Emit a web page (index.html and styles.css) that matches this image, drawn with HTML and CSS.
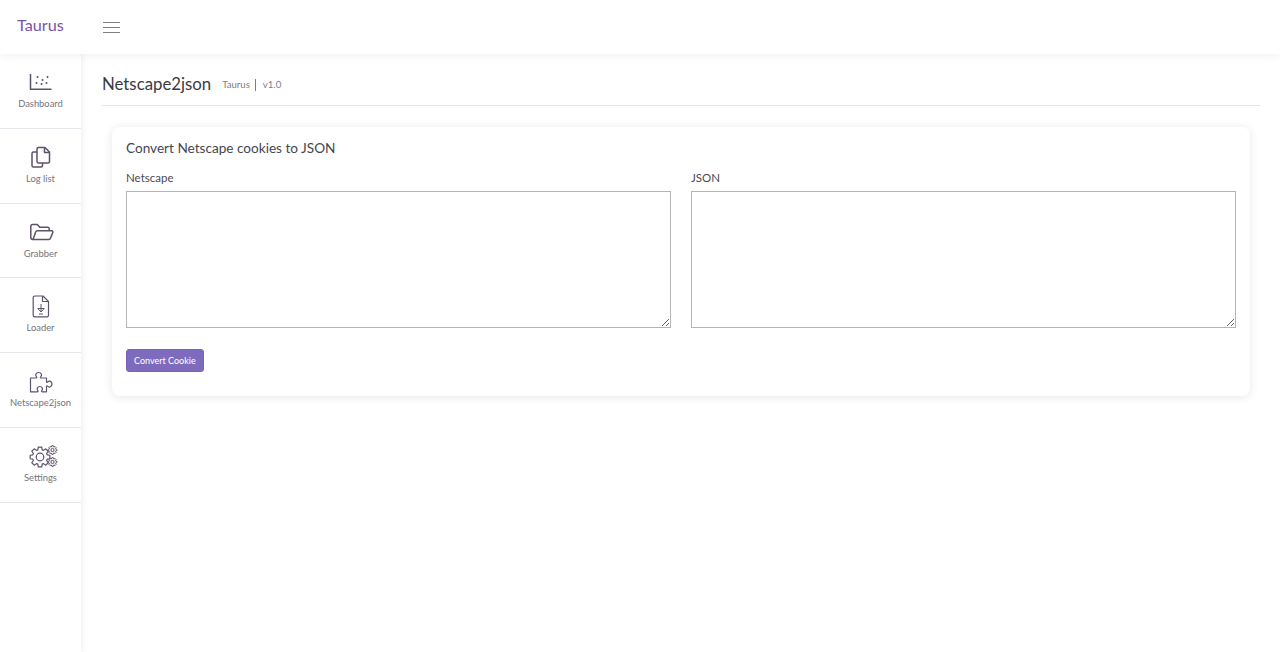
FILE: index.html
```html
<!DOCTYPE html>
<html lang="en">
  <head>
    <meta charset="utf-8" />
    <title>Netscape2json - Taurus</title>
    <link rel="stylesheet" href="styles.css">
  </head>
  <body>
    <!-- Top bar -->
    <header class="topbar">
      <a class="topbar__logo">Taurus</a>
      <button class="topbar__toggle" aria-label="Menu">
        <span></span><span></span><span></span>
      </button>
    </header>

    <div class="layout">
      <!-- Sidebar -->
      <nav class="sidebar">
        <a class="sidebar__item">
          <svg class="sidebar__icon" viewBox="0 0 30 24">
            <path d="M4.500 3v15.200h21" />
            <circle class="dot" cx="11.500" cy="6" r="1" />
            <circle class="dot" cx="10.500" cy="12" r="1" />
            <circle class="dot" cx="16.500" cy="9" r="1" />
            <circle class="dot" cx="21.500" cy="6" r="1" />
            <circle class="dot" cx="20.500" cy="12" r="1" />
            <circle class="dot" cx="15.500" cy="13" r="1" />
          </svg>
          <span>Dashboard</span>
        </a>
        <a class="sidebar__item">
          <svg class="sidebar__icon" viewBox="0 0 30 24">
            <path d="M11 3c0-.9.6-1.500 1.500-1.500h6.500l4.500 4.500v9.500c0 .9-.6 1.500-1.500 1.500h-9.500c-.9 0-1.500-.6-1.500-1.500z" />
            <path d="M18.500 1.800v4.700h4.700" />
            <path d="M11 6H7.500C6.600 6 6 6.600 6 7.500V19.500c0 .9.600 1.500 1.500 1.500h7.500c.9 0 1.500-.6 1.500-1.500V17" />
          </svg>
          <span>Log list</span>
        </a>
        <a class="sidebar__item">
          <svg class="sidebar__icon" viewBox="0 0 30 24">
            <path d="M7 18.500c-1.400 0-2.200-.8-2.200-2V5.500c0-1.200.8-2 2-2h4.500l2.500 2.700h7.800c1 0 1.600.7 1.600 1.600v1.700" />
            <path d="M7 18.500l2.700-7.500c.3-.8.9-1.200 1.700-1.200h14.300c.9 0 1.400.8 1.100 1.600l-2.200 5.700c-.3.900-1 1.400-2 1.400z" />
          </svg>
          <span>Grabber</span>
        </a>
        <a class="sidebar__item">
          <svg class="sidebar__icon sidebar__icon--light" viewBox="0 0 30 24">
            <path d="M8.800 1h8.200l5.500 5.500v13.700c0 .9-.7 1.600-1.600 1.600H8.800c-.9 0-1.600-.7-1.600-1.600V2.600c0-.9.700-1.600 1.600-1.600z" />
            <path d="M16.500 1.300v5.200h5.700" />
            <path class="thin" d="M15 9v8M11.800 13.500h6.400L15 17zM13 19h4" />
          </svg>
          <span>Loader</span>
        </a>
        <a class="sidebar__item">
          <svg class="sidebar__icon sidebar__icon--light" viewBox="0 0 30 24">
            <path d="M4.500 8h5.700c.7 0 .8-.6.300-1.100-.8-.8-1-1.900-.6-2.800.5-1 1.500-1.600 2.700-1.600s2.200.6 2.700 1.600c.4.900.2 2-.6 2.800-.5.500-.4 1.100.3 1.100h5.500v3.700c0 .7.600.8 1.100.3.800-.8 1.900-1 2.800-.6 1 .5 1.600 1.500 1.600 2.700s-.6 2.200-1.600 2.700c-.9.400-2 .2-2.800-.6-.5-.5-1.100-.4-1.100.3v5.300h-4.300c-.8 0-.9-.6-.4-1.200.7-.8.9-1.800.4-2.700-.5-.9-1.400-1.400-2.400-1.400s-1.900.5-2.400 1.400c-.5.900-.3 1.900.4 2.700.5.600.4 1.200-.4 1.200H4.500z" />
          </svg>
          <span>Netscape2json</span>
        </a>
        <a class="sidebar__item">
          <svg class="sidebar__icon sidebar__icon--light" viewBox="0 0 30 24">
            <defs>
              <path id="gear" vector-effect="non-scaling-stroke" d="M9.850 1.740L7.170 2.190 6.620 3.520 8.190 5.740 5.740 8.190 3.520 6.620 2.190 7.170 1.740 9.850H-1.740L-2.190 7.170-3.520 6.620-5.740 8.190-8.190 5.740-6.620 3.520-7.170 2.190-9.850 1.740V-1.740L-7.170-2.190-6.620-3.520-8.190-5.740-5.740-8.190-3.520-6.620-2.190-7.170-1.740-9.850H1.740L2.190-7.170 3.520-6.620 5.740-8.190 8.190-5.740 6.620-3.520 7.170-2.190 9.850-1.740z" />
            </defs>
            <use href="#gear" transform="translate(14 12)" />
            <circle cx="14" cy="12" r="3.800" />
            <use class="small" href="#gear" transform="translate(26.500 5) scale(.44)" />
            <circle class="thin" cx="26.500" cy="5" r="1.600" />
            <use class="small" href="#gear" transform="translate(26.500 17) scale(.44)" />
            <circle class="thin" cx="26.500" cy="17" r="1.600" />
          </svg>
          <span>Settings</span>
        </a>
      </nav>

      <!-- Page content -->
      <main class="content">
        <div class="page-header">
          <h1 class="page-header__title">Netscape2json</h1>
          <span class="page-header__crumb page-header__crumb--sep">Taurus</span>
          <span class="page-header__crumb">v1.0</span>
        </div>

        <section class="card">
          <h2 class="card__title">Convert Netscape cookies to JSON</h2>
          <div class="form-row">
            <div class="form-group">
              <label class="form-group__label">Netscape</label>
              <textarea class="form-group__input"></textarea>
            </div>
            <div class="form-group">
              <label class="form-group__label">JSON</label>
              <textarea class="form-group__input"></textarea>
            </div>
          </div>
          <button class="btn">Convert Cookie</button>
        </section>
      </main>
    </div>
  </body>
</html>
```

FILE: styles.css
```css
* {
  box-sizing: border-box;
}
html,
body {
  height: 100%;
}
body {
  margin: 0;
  background-color: #fff;
  color: #3a3a3a;
  font-family: "Lato", "Noto Sans", sans-serif;
  overflow: hidden;
}

.topbar {
  display: flex;
  align-items: center;
  height: 54px;
  padding-left: 17px;
  background-color: #fff;
  box-shadow: 0 1px 10px rgba(0, 0, 0, 0.07);
  position: relative;
  z-index: 2;
}
.topbar__logo {
  width: 86px;
  margin-top: -5px;
  color: #7a52ad;
  font-size: 16.2px;
}
.topbar__toggle {
  display: flex;
  flex-direction: column;
  gap: 4px;
  width: 17px;
  margin: 1px 0 0;
  padding: 0;
  border: 0;
  background: none;
}
.topbar__toggle span {
  display: block;
  width: 17px;
  height: 1px;
  background-color: #808080;
}

.layout {
  display: flex;
  height: 598px;
}

.sidebar {
  flex: none;
  width: 81px;
  background-color: #fff;
  box-shadow: 1px 0 6px rgba(0, 0, 0, 0.08);
  position: relative;
  z-index: 1;
}
.sidebar__item {
  display: flex;
  flex-direction: column;
  align-items: center;
  height: 74.8px;
  padding-top: 17px;
  border-bottom: 1px solid #e3e6ea;
  color: #74747c;
  font-size: 9.4px;
}
.sidebar__item span {
  margin-top: 2px;
  line-height: 14px;
  white-space: nowrap;
}
.sidebar__icon {
  flex: none;
  width: 30px;
  height: 24px;
  fill: none;
  stroke: #5d5269;
  stroke-width: 1.5;
  stroke-linejoin: round;
  overflow: visible;
}
.sidebar__icon--light {
  stroke-width: 1.2;
}
.sidebar__icon .dot {
  fill: #5d5269;
  stroke: none;
}
.sidebar__icon .thin,
.sidebar__icon .small {
  stroke-width: 1;
}

.content {
  flex: 1;
  padding: 0 20px 0 21px;
}

.page-header {
  display: flex;
  align-items: flex-start;
  height: 52px;
  padding-top: 19px;
  border-bottom: 1px solid #e6e6e6;
}
.page-header__title {
  margin: 0 11px 0 0;
  color: #3a3a44;
  font-size: 16.8px;
  font-weight: 400;
  line-height: 22px;
}
.page-header__crumb {
  margin-top: 6px;
  color: #7d7d85;
  font-size: 9.6px;
  line-height: 12px;
}
.page-header__crumb--sep {
  margin-right: 7px;
  padding-right: 5px;
  border-right: 1px solid #7d7d85;
}

.card {
  height: 269px;
  margin: 21px 10px 0;
  padding: 13px 14px;
  border-radius: 8px;
  background-color: #fff;
  box-shadow: 0 1px 10px rgba(0, 0, 0, 0.1);
}
.card__title {
  margin: 0 0 14px;
  color: #45454e;
  font-size: 13.6px;
  font-weight: 400;
  line-height: 17px;
}

.form-row {
  display: flex;
  gap: 20px;
}
.form-group {
  flex: 1;
}
.form-group__label {
  display: block;
  margin-bottom: 6px;
  color: #4a4a52;
  font-size: 11.5px;
  line-height: 14px;
}
.form-group__input {
  display: block;
  width: 100%;
  height: 137px;
  border: 1px solid #b5b5b5;
  background-color: #fff;
}

.btn {
  display: block;
  height: 23px;
  margin-top: 21px;
  padding: 0 7px;
  border: 1px solid #7a63b8;
  border-radius: 3px;
  background-color: #7e6bbd;
  color: #fff;
  font-family: inherit;
  font-size: 9px;
}
```
